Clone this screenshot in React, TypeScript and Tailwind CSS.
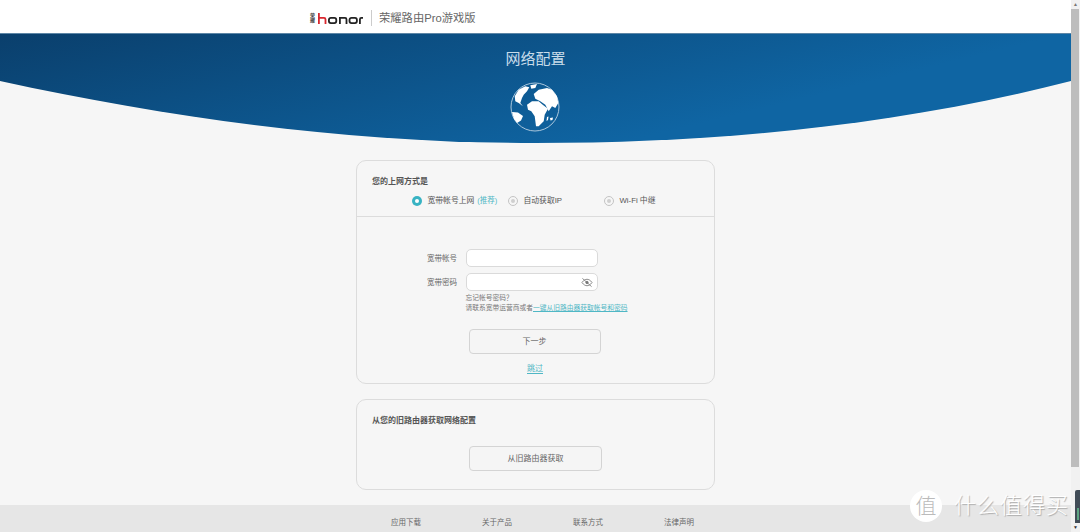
const font = "font-['Liberation_Sans','Noto_Sans_CJK_SC',sans-serif]";

function Logo() {
  return (
    <div className="flex items-center gap-[3px]">
      <div className="flex w-[5px] flex-col items-center text-[5px] leading-[5px] font-bold text-[#444]">
        <span>荣</span>
        <span>耀</span>
      </div>
      <svg width="45" height="11" viewBox="0 0 45 11" fill="none" strokeWidth="1.8">
        <path d="M.9 0V11" stroke="#d9262e" />
        <path d="M.9 4.900H6a1.500 1.500 0 0 1 1.500 1.500V11" stroke="#d9262e" />
        <rect x="10.900" y="4.900" width="7.400" height="5.200" rx="2" stroke="#222" />
        <path d="M21.900 11V4.900H27a1.500 1.500 0 0 1 1.500 1.500V11" stroke="#222" />
        <rect x="31.500" y="4.900" width="7.400" height="5.200" rx="2" stroke="#222" />
        <path d="M41.900 11V6.400a1.500 1.500 0 0 1 1.500-1.500H45" stroke="#222" />
      </svg>
    </div>
  );
}

function Banner() {
  return (
    <svg className="block" width="1071" height="110" viewBox="0 33 1071 110">
      <defs>
        <linearGradient id="band" gradientUnits="userSpaceOnUse" x1="0" y1="33" x2="61" y2="281">
          <stop offset="0" stopColor="#0a3f6c" />
          <stop offset="1" stopColor="#0f65a3" />
        </linearGradient>
      </defs>
      <path d="M0 33H1071V81C900 125 720 143 535 143C350 143 170 118 0 81Z" fill="url(#band)" />
      <path d="M0 33.500H1071" stroke="#5d86a6" strokeWidth="1" />
    </svg>
  );
}

function Globe() {
  return (
    <svg width="50" height="50" viewBox="0 0 50 50">
      <circle cx="25" cy="25" r="24" fill="none" stroke="#a9c6dc" strokeWidth="1" />
      <g fill="#fff">
        <path d="M4.700 14.300L8.700 7.700L15.300 4.300L19.300 5.300L17 9.300L13.700 12.700L12 16L10.300 21L13 24.300L8.700 21L5.300 19.300Z" />
        <path d="M20.300 3.300L27 2L25.300 6L21.300 6.700Z" />
        <path d="M23.700 12L28.700 7.700L37 6L42 7.700L47 14.300L48.300 21L45.300 26L42 24.300L38.700 29.300L35.300 22.700L30.300 19.300L25.300 16.700Z" />
        <path d="M17 22.700L22 19.300L28.700 19.300L32.700 22.700L38 26.700L34.700 32.700L33.700 39.300L28.700 44.300L26 44.300L24.700 34.300L21.300 29.300L18 27.700Z" />
        <path d="M2 30L8 30.500L13 34L11 38.500L7 41L4 37Z" />
        <path d="M37 35L38.500 34.500L38 38L36.500 39Z" />
        <path d="M40 36L43 35.500L42.500 38L40.500 38.500Z" />
      </g>
    </svg>
  );
}

function Radio({ on, label, extra }: { on?: boolean; label: string; extra?: string }) {
  return (
    <div className="flex items-center gap-[5.5px]">
      {on ? (
        <span className="flex h-[10px] w-[10px] items-center justify-center rounded-full bg-[#38b3c3]">
          <span className="h-[4px] w-[4px] rounded-full bg-white" />
        </span>
      ) : (
        <span className="flex h-[10px] w-[10px] items-center justify-center rounded-full border border-[#c4c4c4]">
          <span className="h-[4px] w-[4px] rounded-full bg-[#cfcfcf]" />
        </span>
      )}
      <span className="pt-[1px] text-[7.8px] leading-[10px] text-[#555]">
        {label}
        {extra && <span className="ml-[3px] text-[7.5px] text-[#4fb7c5]">{extra}</span>}
      </span>
    </div>
  );
}

function Field({ label, eye }: { label: string; eye?: boolean }) {
  return (
    <div className="flex items-center">
      <span className="w-[38.500px] pt-[1px] text-[7.5px] text-[#666]">{label}</span>
      <div className="flex h-[18px] w-[132px] items-center justify-end rounded-[5px] border border-[#dadada] bg-white pr-[4px]">
        {eye && (
          <svg width="12" height="11" viewBox="0 0 13 12" fill="none" stroke="#777" strokeWidth="0.9">
            <path d="M1 6C3 3.200 5 2.500 6.500 2.500S10 3.200 12 6C10 8.800 8 9.500 6.500 9.500S3 8.800 1 6Z" />
            <circle cx="6.500" cy="6" r="1.300" fill="#777" />
            <path d="M1.500 1.500L11.500 10.500" />
          </svg>
        )}
      </div>
    </div>
  );
}

function Btn({ label, w }: { label: string; w: string }) {
  return (
    <button className={`flex h-[25px] items-center justify-center rounded-[4px] border-[1.5px] border-[#d4d4d4] bg-[#f5f5f5] text-[8px] text-[#666] ${w}`}>
      {label}
    </button>
  );
}

export default function App() {
  return (
    <div className={`relative flex h-[532px] w-[1080px] overflow-hidden bg-[#f6f6f6] ${font}`}>
      <div className="flex w-[1071px] flex-col">
        <header className="flex h-[33px] shrink-0 items-center bg-white pt-[3px] pl-[310px]">
          <Logo />
          <span className="mr-[7px] ml-[8px] h-[16px] w-px bg-[#ccc]" />
          <span className="text-[11.3px] text-[#666]">荣耀路由Pro游戏版</span>
        </header>

        <div className="relative h-[110px] shrink-0">
          <Banner />
          <div className="absolute inset-x-0 top-[16px] flex flex-col items-center">
            <span className="text-[15px] leading-5 text-[#c8dcea]">网络配置</span>
            <div className="mt-[13px] mr-[2px]">
              <Globe />
            </div>
          </div>
        </div>

        <main className="flex flex-1 flex-col items-center pt-[17px]">
          <section className="h-[224px] w-[359px] rounded-[10px] border border-[#dcdcdc]">
            <div className="h-[56px] border-b border-[#dcdcdc] px-[15px] pt-[16px]">
              <p className="text-[8px] leading-[10px] font-bold text-[#555]">您的上网方式是</p>
              <div className="mt-[8px] flex">
                <div className="ml-[40px] w-[96px]">
                  <Radio on label="宽带帐号上网" extra="(推荐)" />
                </div>
                <div className="w-[96px]">
                  <Radio label="自动获取IP" />
                </div>
                <Radio label="Wi-Fi 中继" />
              </div>
            </div>
            <div className="flex flex-col">
              <div className="mt-[32px] ml-[70px] flex w-[171px] flex-col gap-[6px]">
                <Field label="宽带帐号" />
                <Field label="宽带密码" eye />
              </div>
              <div className="mt-[2px] ml-[70px] pl-[38.500px] text-[6.75px] leading-[9.5px] text-[#777]">
                <p>忘记帐号密码？</p>
                <p>
                  请联系宽带运营商或者
                  <span className="text-[#4fb7c5] underline">一键从旧路由器获取帐号和密码</span>
                </p>
              </div>
              <div className="mt-[17px] flex justify-center pr-[2px]">
                <Btn label="下一步" w="w-[132px]" />
              </div>
              <span className="mt-[10px] pr-[1px] text-center text-[8px] leading-[10px] text-[#4fb7c5] underline underline-offset-2">跳过</span>
            </div>
          </section>

          <section className="mt-[15px] h-[91px] w-[359px] rounded-[10px] border border-[#dcdcdc] px-[15px] pt-[16px]">
            <p className="text-[8px] leading-[10px] font-bold text-[#555]">从您的旧路由器获取网络配置</p>
            <div className="mt-[20px] flex justify-center">
              <Btn label="从旧路由器获取" w="w-[133px]" />
            </div>
          </section>
        </main>

        <footer className="relative flex h-[27px] shrink-0 gap-[61px] bg-[#e6e6e6] pt-[13px] pl-[391px] text-[7.5px] leading-[10px] text-[#666]">
          <span>应用下载</span>
          <span>关于产品</span>
          <span>联系方式</span>
          <span>法律声明</span>
          <div className="absolute right-[2px] bottom-[10px] flex items-center gap-[12px] text-[22px] leading-7 font-light text-white [text-shadow:1px_1px_1px_#aaa]">
            <span className="flex h-[32px] w-[32px] items-center justify-center rounded-full bg-white text-[21px] text-[#bbb] [text-shadow:none]">值</span>
            <span className="tracking-[1px] whitespace-nowrap">什么值得买</span>
          </div>
        </footer>
      </div>

      <div className="flex w-[9px] flex-col bg-[#f1f1f1]">
        <div className="flex h-[9px] items-center justify-center text-[5px] leading-none text-[#777]">▲</div>
        <div className="h-[458px] w-[8px] bg-[#bdbdbd]" />
        <div className="flex-1" />
        <div className="flex h-[9px] items-center justify-center text-[5px] leading-none text-[#333]">▼</div>
      </div>

      <div className="absolute top-[490px] right-0 h-[33px] w-[5px] rounded-tl-[2px] bg-[#414c57] pt-[18px] pl-[2px]">
        <div className="h-[12px] w-[2px] bg-[#5da583]" />
      </div>
    </div>
  );
}
